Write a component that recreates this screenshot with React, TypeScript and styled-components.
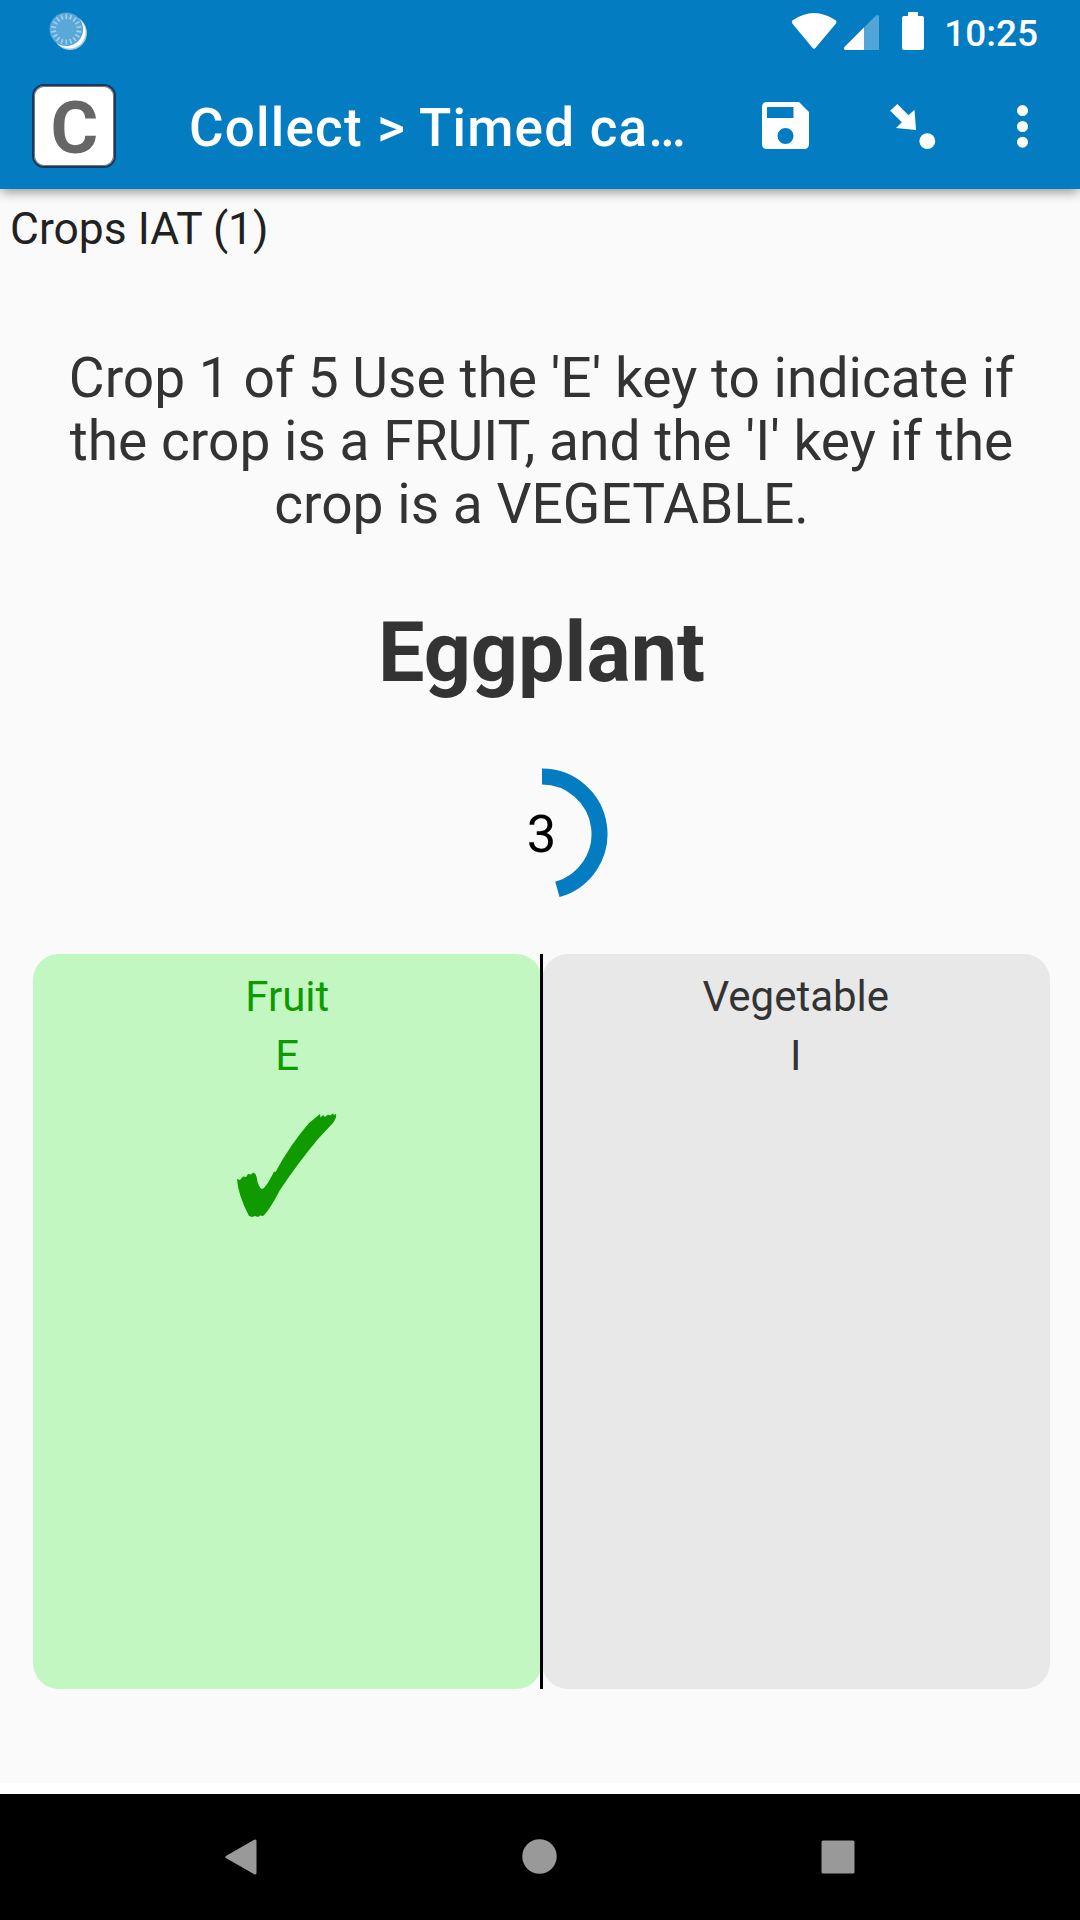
import React from "react";
import styled, { createGlobalStyle } from "styled-components";

const Global = createGlobalStyle`
  * { box-sizing: border-box; }
  html, body { margin: 0; padding: 0; background: #fff; }
  body { font-family: Roboto, "Liberation Sans", sans-serif; }
  svg { display: block; }
`;

const Screen = styled.div`
  width: 1080px;
  height: 1920px;
  display: flex;
  flex-direction: column;
  overflow: hidden;
  background: #fff;
`;

const TopChrome = styled.header`
  position: relative;
  flex: none;
  height: 189px;
  background: #037cc2;
  color: #fff;
  box-shadow: 0 4px 11px -1px rgba(0, 0, 0, 0.42);
`;

const StatusBar = styled.div`
  height: 63px;
  display: flex;
  align-items: flex-start;
  padding: 0 42px 0 48px;
`;

const StatusIcons = styled.div`
  display: flex;
  margin-left: auto;
`;

const Clock = styled.div`
  font-size: 37px;
  font-weight: 500;
  line-height: 44px;
  margin: 12px 0 0 18px;
`;

const Toolbar = styled.div`
  height: 126px;
  display: flex;
  align-items: center;
  padding: 0 46px 0 32px;
`;

const Logo = styled.div`
  width: 84px;
  height: 84px;
  flex: none;
  display: flex;
  align-items: center;
  justify-content: center;
  padding: 3px 0 0 1px;
  border: 2px solid #18395a;
  border-radius: 12px;
  background: #fff;
  box-shadow: inset 0 0 0 1px #777;
  color: #666;
  font-size: 73px;
  font-weight: 700;
  line-height: 80px;
`;

const Title = styled.h1`
  flex: none;
  width: 500px;
  margin: 0 0 0 73px;
  padding-top: 4px;
  font-size: 53px;
  font-weight: 500;
  line-height: 62px;
  letter-spacing: 1.2px;
  white-space: nowrap;
`;

const Actions = styled.div`
  flex: 1;
  display: flex;
  justify-content: flex-end;
  align-items: center;
`;

const Content = styled.main`
  flex: none;
  height: 1594px;
  display: flex;
  flex-direction: column;
  background: #fafafa;
  color: #333;
`;

const Breadcrumb = styled.div`
  padding: 13px 0 0 10px;
  font-size: 44.4px;
  line-height: 54px;
  color: #212121;
`;

const Instructions = styled.p`
  margin: 91px 30px 0 33px;
  font-size: 55.125px;
  line-height: 63px;
  text-align: center;
  white-space: pre;
`;

const Stimulus = styled.h2`
  margin: 69px 30px 0 33px;
  font-size: 82.7px;
  font-weight: 700;
  line-height: 96px;
  text-align: center;
`;

const Timer = styled.div`
  width: 132px;
  height: 132px;
  margin: 67px 0 0 475.5px;
  display: grid;
  place-items: center;
  color: #000;
  font-size: 52.5px;
  line-height: 62px;
  > * { grid-area: 1 / 1; }
`;

const Choices = styled.div`
  height: 735px;
  margin: 54px 30px 0 33px;
  display: flex;
`;

const Choice = styled.div<{ $selected?: boolean }>`
  flex: 1;
  display: flex;
  flex-direction: column;
  align-items: center;
  padding-top: 13px;
  border-radius: 26px;
  font-size: 42px;
  line-height: 59px;
  background: ${(p) => (p.$selected ? "#c2f7c2" : "#e8e8e8")};
  color: ${(p) => (p.$selected ? "#0f9b00" : "#333")};
`;

const Divider = styled.div`
  flex: none;
  z-index: 1;
  width: 3px;
  margin: 0 -1.5px;
  background: #000;
`;

const Check = styled.svg`
  margin-top: 27px;
`;

const NavBar = styled.nav`
  flex: none;
  height: 126px;
  margin-top: 11px;
  background: #000;
`;

const ticks = Array.from({ length: 18 }, (_, i) => i * 20);

export default function App() {
  return (
    <>
      <Global />
      <Screen>
        <TopChrome>
          <StatusBar>
            <svg width="42" height="56" viewBox="48 0 42 56">
              <circle cx="70" cy="33" r="17" fill="#9bcbe8" />
              <circle cx="69.2" cy="32" r="16.5" fill="#fff" />
              <circle cx="66.3" cy="29.3" r="16.8" fill="#58a8d8" />
              {ticks.map((a) => (
                <path key={a} d="M66.3 14v5" stroke="#a5d0ea" strokeWidth="1.6" transform={`rotate(${a} 66.3 29.3)`} />
              ))}
            </svg>
            <StatusIcons>
              <svg width="136" height="56" viewBox="790 0 136 56">
                <path d="M792.3 20.5Q814 5.5 836 20.5Q837 22 836 23.5L815.8 47.5Q814 50 812.2 47.5L792.3 23.5Q791.2 22 792.3 20.5Z" fill="#fff" />
                <path d="M844.5 47L876 15.5Q879 14 879 17V50H845Q843.300 49 844.500 47Z" fill="#52a5d6" />
                <path d="M844.5 47L864 27.500V50H845Q843.300 49 844.500 47Z" fill="#fff" />
                <path d="M908 12H918V16H922Q924 16 924 18V48Q924 50 922 50H904Q902 50 902 48V18Q902 16 904 16H908Z" fill="#fff" />
              </svg>
              <Clock>10:25</Clock>
            </StatusIcons>
          </StatusBar>
          <Toolbar>
            <Logo>C</Logo>
            <Title>Collect &gt; Timed ca…</Title>
            <Actions>
              <svg width="276" height="60" viewBox="758 96 276 60" fill="#fff">
                <path fillRule="evenodd" d="M767 102H799L809 112V144Q809 149 804 149H767Q762 149 762 144V107Q762 102 767 102ZM767 107V118H793.500V107ZM785.500 128A8 8 0 1 0 785.500 144A8 8 0 1 0 785.500 128Z" />
                <path d="M897.300 104L908.500 115.200L914.500 109.700L916 130L896 128L901.800 122.300L890.200 110.700Z" />
                <circle cx="927.300" cy="141.200" r="7.900" />
                <circle cx="1022.500" cy="110.600" r="5.500" />
                <circle cx="1022.500" cy="126.500" r="5.500" />
                <circle cx="1022.500" cy="142.200" r="5.500" />
              </svg>
            </Actions>
          </Toolbar>
        </TopChrome>
        <Content>
          <Breadcrumb>Crops IAT (1)</Breadcrumb>
          <Instructions>
            {"Crop 1 of 5 Use the 'E' key to indicate if\nthe crop is a FRUIT, and the 'I' key if the\ncrop is a VEGETABLE."}
          </Instructions>
          <Stimulus>Eggplant</Stimulus>
          <Timer>
            <svg width="132" height="132" viewBox="0 0 132 132">
              <path d="M66 8.500A57.500 57.500 0 0 1 81.400 121.400" fill="none" stroke="#037cc2" strokeWidth="16" />
            </svg>
            <span>3</span>
          </Timer>
          <Choices>
            <Choice $selected>
              <div>Fruit</div>
              <div>E</div>
              <Check width="100" height="106" viewBox="237 1112 100 106">
                <path d="M237 1179L240 1180L243 1176.500L246 1177L248 1174L251 1174.500L253 1172.500L255.500 1174Q257 1177 257.500 1182Q260 1189 262 1189Q266 1188 274 1171.500L275.500 1172Q290 1145 309 1123L320 1114L320.500 1117.500L323 1115L325 1117L328 1114.500L330 1115.500L333 1113.500L334 1115L336 1114Q337 1118 332 1124L318 1139Q298 1163 280 1190Q269 1211 263 1216L260 1215.500L258 1217L255 1216L252 1217L249 1216Q238 1195 237 1179Z" fill="#0f9b00" />
              </Check>
            </Choice>
            <Divider />
            <Choice>
              <div>Vegetable</div>
              <div>I</div>
            </Choice>
          </Choices>
        </Content>
        <NavBar>
          <svg width="1080" height="126" viewBox="0 1794 1080 126" fill="#999" stroke="#999" strokeWidth="3" strokeLinejoin="round">
            <path d="M227 1857L255 1841V1873Z" />
            <circle cx="539.500" cy="1856.500" r="15.700" />
            <rect x="823" y="1842" width="30" height="30" />
          </svg>
        </NavBar>
      </Screen>
    </>
  );
}
